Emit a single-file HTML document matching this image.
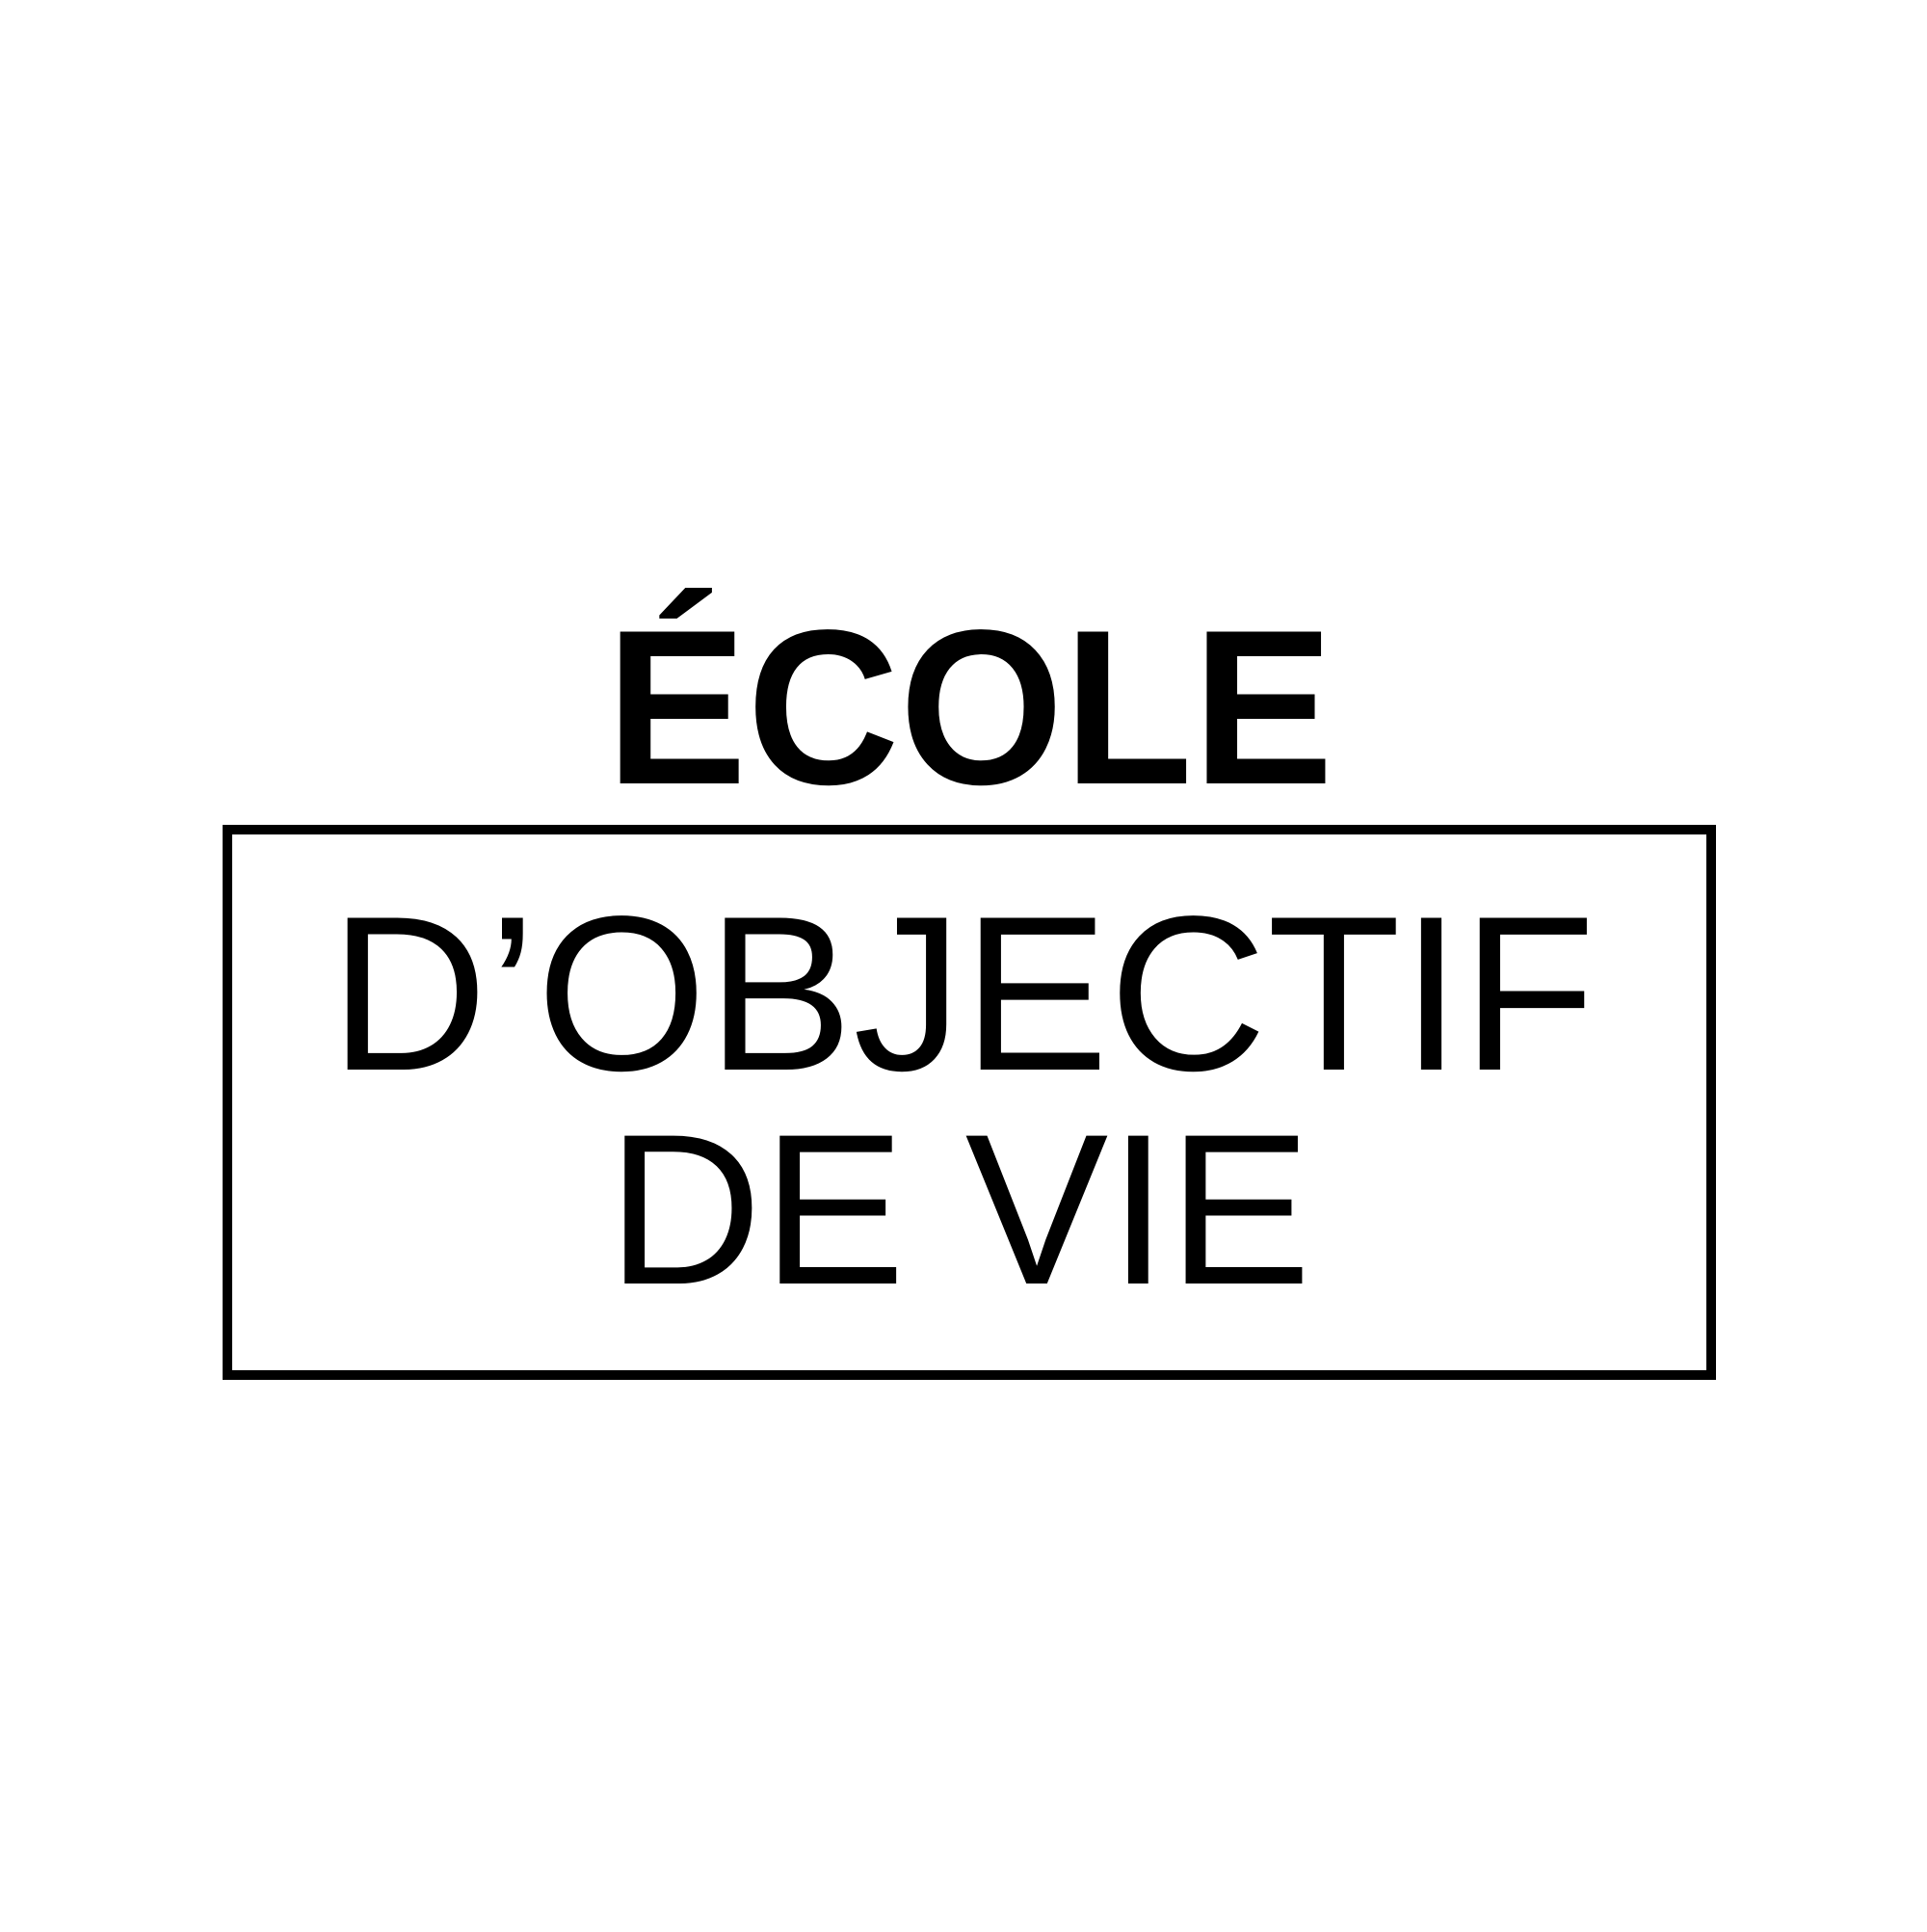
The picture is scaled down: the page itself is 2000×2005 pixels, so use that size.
<!DOCTYPE html>
<html><head><style>html,body{margin:0;padding:0;background:#fff;}</style></head>
<body>
<svg width="2000" height="2000" viewBox="0 0 2000 2000" xmlns="http://www.w3.org/2000/svg">
<rect width="2000" height="2000" fill="#fff"/>
<rect x="236" y="861" width="1540" height="566" fill="none" stroke="#000" stroke-width="10"/>
<g font-family="Liberation Sans, sans-serif" fill="#000">
<text x="629" y="813" font-size="229" font-weight="bold" textLength="755" lengthAdjust="spacingAndGlyphs">ÉCOLE</text>
<text x="342" y="1110" font-size="229" textLength="1314" lengthAdjust="spacingAndGlyphs">D’OBJECTIF</text>
<text x="630" y="1332" font-size="223" textLength="731" lengthAdjust="spacingAndGlyphs">DE VIE</text>
</g>
</svg>
</body></html>
